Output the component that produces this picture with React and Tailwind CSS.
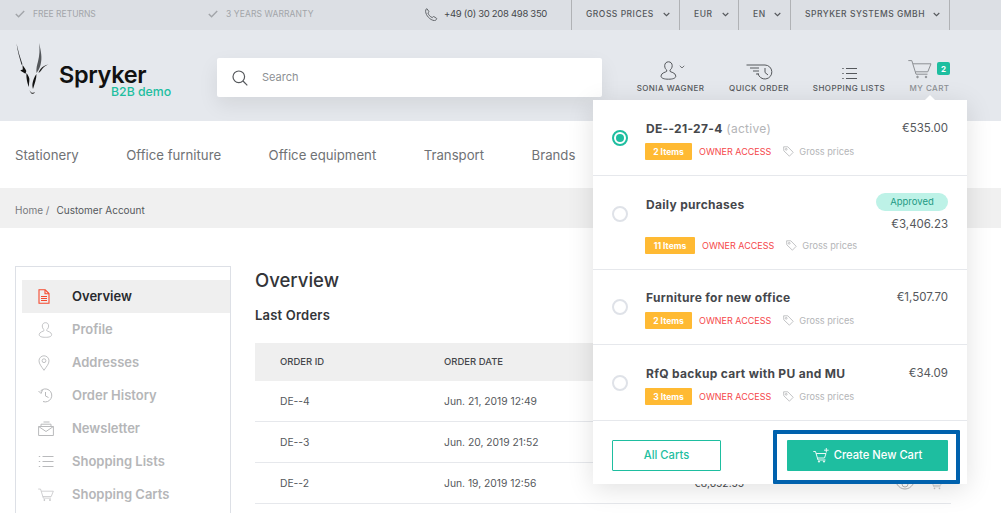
const F = { fontFamily: "Inter, 'Noto Sans', sans-serif" };

const Check = () => (
  <svg width="10" height="8" viewBox="0 0 10 8" fill="none" stroke="#a2a5a9" strokeWidth="1.4"><path d="M.8 4l2.800 2.800L9.200 1" /></svg>
);
const Chev = () => (
  <svg width="7" height="5" viewBox="0 0 7 5" fill="none" stroke="#55585c" strokeWidth="1.100"><path d="M.7 1l2.800 2.700L6.300 1" /></svg>
);
const Phone = () => (
  <svg width="13" height="13" viewBox="0 0 13 13" fill="none" stroke="#55585c" strokeWidth=".9"><path d="M2 .8 3.800 3.400c.2.400 0 .7-.3 1l-.6.600c.6 1.800 2.200 3.600 4.300 4.600l.8-.8c.3-.3.6-.3 1-.1l2.500 1.600c.3.200.3.500.1.800-.6 1-1.400 1.600-2.300 1.500C5 12 .8 7.500.6 3.300.5 2.200 1 1.300 1.500.8c.2-.1.400-.1.500 0Z" /></svg>
);
const UserIcon = ({ c = "#55585c", w = 17, h = 19 }) => (
  <svg width={w} height={h} viewBox="0 0 17 19" fill="none" stroke={c} strokeWidth="1"><path d="M8.500.8c2.200 0 3.700 1.600 3.700 3.900 0 2-1 3.600-2.200 4.300v1.300c0 .7 5.800 1.300 5.800 4.700 0 2.300-3 3.200-7.300 3.200S1 17.300 1 15c0-3.400 5.700-4 5.700-4.700V9C5.500 8.300 4.700 6.700 4.700 4.700 4.700 2.400 6.300.8 8.500.8Z" /></svg>
);
const QuickIcon = () => (
  <svg width="27" height="16" viewBox="0 0 27 16" fill="none" stroke="#55585c" strokeWidth="1"><path d="M.5 1h18.500a7 7 0 1 1-7 8.500" /><path d="M19 4v4.500l3 2.500" /><path d="M4 4h9M7 7h6M10 10h3" /></svg>
);
const ListIcon = ({ c = "#55585c", w = 15, h = 13 }) => (
  <svg width={w} height={h} viewBox="0 0 15 13" fill="none" stroke={c} strokeWidth="1"><path d="M4 1.500h11M4 6.500h11M4 11.500h11M.3 1.500h1.400M.3 6.500h1.400M.3 11.500h1.400" /></svg>
);
const CartIcon = ({ c = "#8d9094", w = 24, h = 21, sw = 1 }) => (
  <svg width={w} height={h} viewBox="0 0 24 19" fill="none" stroke={c} strokeWidth={sw}><path d="M.3.600h3.500l4.200 13.600h11.500" /><path d="M5 3.800h18l-3.200 8H7.300" /><circle cx="9.500" cy="17" r=".8" fill={c} /><circle cx="18" cy="17" r=".8" fill={c} /></svg>
);
const Tag = () => (
  <svg width="11" height="11" viewBox="0 0 11 11" fill="none" stroke="#b4b5b7" strokeWidth=".8"><path d="M.6.800h4.200l5.400 5.500-3.800 3.900L.8 4.800Z" /><circle cx="3.200" cy="3.300" r=".9" /></svg>
);
const Radio = ({ on }) => (
  <div className={"w-4 h-4 rounded-full border-[2px] flex items-center justify-center bg-white " + (on ? "border-[#1ebea0]" : "border-[#dfe2e8]")}>
    {on && <div className="w-2 h-2 rounded-full bg-[#1ebea0]" />}
  </div>
);

const Logo = () => (
  <svg width="35" height="54" viewBox="0 0 32 54" className="shrink-0">
    <path d="M0 .500c1.500 7 3.500 14 6 21l-1 .2C3 15 1 8 0 .500Z" fill="#26282b" />
    <path d="M22.500 0c2 8 3.500 15 1.500 22-1 4-3 6.500-4 8-.5-4 .5-8 1.500-11.500 1.500-6 2-12 1-18.500Z" fill="#55585c" />
    <path d="M6 22c1.500 2 3 4 3.800 6l-.8 2.800L4.500 28l-.6-.8 2.400-.7Z" fill="#111" />
    <path d="M32 21.500c-3 .5-6 2-8 4.500-1.500 2-2 4-2 4 2-1 3-3.500 5-5.500 1.500-1.500 3-2.300 5-3Z" fill="#222" />
    <path d="M10 30c1.500 2 3.500 5 2.800 8-.3 2-.5 4-.3 6-1.500-3-3-9-2.500-14Z" fill="#111" />
    <path d="M20 31c-2 2.500-3.500 6-4 9.500-.3 2 0 4 .5 5.500 1.500-5 3.500-10 3.500-15Z" fill="#111" />
    <path d="M13 47c.5 2 1.800 4 3 4 1.200 0 2-1 2.500-2-1 .5-2 1-3 .7-1-.3-1.800-1.500-2.500-2.700Z" fill="#444" />
  </svg>
);

const DocIcon = () => (
  <svg width="12" height="15" viewBox="0 0 12 15" fill="none" stroke="#f5492f" strokeWidth="1.100"><path d="M1 .8h6.200L11 4.500v9.700H1Z" /><path d="M7 1v3.700h4M3 7.500h6M3 9.500h6M3 11.500h6" /></svg>
);
const PinIcon = () => (
  <svg width="12" height="16" viewBox="0 0 12 16" fill="none" stroke="#b9babc" strokeWidth=".9"><path d="M6 15.300C3.500 11.500 1 9 1 5.800a5 5 0 0 1 10 0C11 9 8.500 11.500 6 15.300Z" /><circle cx="6" cy="5.700" r="1.900" /></svg>
);
const HistIcon = () => (
  <svg width="15" height="15" viewBox="0 0 15 15" fill="none" stroke="#b9babc" strokeWidth="1"><path d="M2.500 3A6.500 6.500 0 1 1 5 13.500" /><path d="M7.500 4v4l3 1.500M.5 3l2.500 2.500L4.500 2" /></svg>
);
const MailIcon = () => (
  <svg width="16" height="15" viewBox="0 0 16 15" fill="none" stroke="#b9babc" strokeWidth="1"><path d="M.6 5.500h14.800v9H.6ZM.6 5.500 8 10.500l7.400-5" /><path d="M3 5.500V3.200h10v2.300M5.500 1h6" /></svg>
);
const Eye = () => (
  <svg width="18" height="12" viewBox="0 0 18 12" fill="none" stroke="#b4b5b7" strokeWidth="1"><path d="M.8 6C3 2.500 6 1 9 1s6 1.500 8.200 5C15 9.500 12 11 9 11S3 9.500.8 6Z" /><circle cx="9" cy="6" r="3" /></svg>
);

const Side = ({ icon, label, active }) => (
  <div className={"h-[33px] flex items-center pl-4 " + (active ? "bg-[#efefef] text-[#282a2e]" : "text-[#b5b6b8]")}>
    <div className="w-[34px] flex justify-start">{icon}</div>
    <span className="text-[13px] font-semibold">{label}</span>
  </div>
);

const Cart = ({ title, active, price, approved, n, w = "w-[47px]", tight }) => (
  <div className={"flex pl-[19px] pr-[19px] pb-[15px] border-b border-[#e6e8ec] " + (tight ? "pt-[19px]" : "pt-5")}>
    <div className="mt-[10px] mr-[17px] shrink-0"><Radio on={active} /></div>
    <div className="flex-1">
      <div className="flex justify-between">
        <div className="ml-[1px] text-[12px] leading-[17px] font-bold text-[#45474b] tracking-[.3px]">{title}{active && <span className="font-normal text-[#b4b5b7]"> (active)</span>}</div>
        <div className="flex flex-col items-end">
          {approved && <div className="-mt-[3px] mb-[5px] h-[18px] w-[72px] rounded-full bg-[#bdf2e7] text-[#1f9a84] text-[9.5px] flex items-center justify-center">Approved</div>}
          <div className={"text-[11.5px] leading-[17px] text-[#55585c] " + (approved ? "-mb-[2px]" : "")}>{price}</div>
        </div>
      </div>
      <div className="mt-[6px] flex items-center h-[17px]">
        <div className={"h-[17px] pt-[1px] rounded-[1px] bg-[#ffba33] text-white text-[8.5px] font-bold flex items-center justify-center " + w}>{n} Items</div>
        <span className="ml-[7px] text-[9px] text-[#f5474a]">OWNER ACCESS</span>
        <span className="ml-3 flex"><Tag /></span>
        <span className="ml-[5px] text-[9.2px] text-[#b4b5b7]">Gross prices</span>
      </div>
    </div>
  </div>
);

const Opt = ({ label, cls }) => (
  <div className={"h-full border-r border-[#b0b2b5] flex items-center justify-between text-[8.5px] font-medium tracking-[.5px] text-[#55585c] pb-[2px] " + cls}>
    <span>{label}</span><Chev />
  </div>
);

const Act = ({ icon, label, cls = "text-[#55585c]", w }) => (
  <div className={"flex flex-col items-center " + w}>
    <div className="h-[21px] flex items-end justify-center">{icon}</div>
    <div className={"mt-[3px] text-[8px] leading-[11px] font-medium tracking-[.45px] whitespace-nowrap " + cls}>{label}</div>
  </div>
);

const Row = ({ id, date, total }) => (
  <div className="h-[41px] pt-[2px] border-b border-[#e6e8ec] flex items-center text-[10.3px] text-[#55585c]">
    <div className="pl-[25px] w-[189px]">{id}</div>
    <div className="w-[250px]">{date}</div>
    {total && <div className="text-[#45474b]">{total}</div>}
    {total && <div className="ml-auto flex items-center gap-[15px] pr-2"><Eye /><CartIcon w={14} h={12} c="#b4b5b7" /></div>}
  </div>
);

export default function App() {
  return (
    <div style={F} className="relative w-[1001px] h-[513px] overflow-hidden bg-white">
      <div className="h-[30px] bg-[#dcdfe4] flex items-center pl-[15px] text-[8.5px]">
        <div className="w-[193px] flex items-center gap-2 text-[#a2a5a9] pb-[2px]"><Check /><span>FREE RETURNS</span></div>
        <div className="w-[217px] flex items-center gap-2 text-[#a2a5a9] tracking-[.1px] pb-[2px]"><Check /><span>3 YEARS WARRANTY</span></div>
        <div className="w-[147px] h-full border-r border-[#b0b2b5] flex items-center gap-[6px] text-[9.5px] tracking-[-.3px] text-[#45474b] pb-[2px]"><Phone /><span>+49 (0) 30 208 498 350</span></div>
        <Opt label="GROSS PRICES" cls="w-[108px] pl-[14px] pr-[9px]" />
        <Opt label="EUR" cls="w-[59px] pl-[14px] pr-[9px]" />
        <Opt label="EN" cls="w-[52px] pl-[14px] pr-[9px]" />
        <Opt label="SPRYKER SYSTEMS GMBH" cls="w-[159px] pl-[14px] pr-[9px]" />
      </div>
      <div className="h-[91px] bg-[#e5e8ed] flex pl-[15px]">
        <div className="w-[202px] pt-[13px] flex">
          <Logo />
          <div className="ml-[9px] mt-[21px]">
            <div className="text-[23.5px] leading-[22px] font-semibold text-[#111] tracking-[-.35px]">Spryker</div>
            <div className="ml-[52px] text-[12.3px] leading-[12px] font-medium text-[#1ebea0] whitespace-nowrap">B2B demo</div>
          </div>
        </div>
        <div className="mt-7 w-[385px] h-[39px] bg-white rounded-[2px] shadow-[0_8px_20px_rgba(0,0,0,.08)] flex items-center pl-[15px]">
          <svg width="16" height="16" viewBox="0 0 16 16" fill="none" stroke="#55585c" strokeWidth="1.200"><circle cx="6.800" cy="6.800" r="5.800" /><path d="M11 11l4.300 4.300" /></svg>
          <span className="ml-[14px] text-[11px] text-[#8d9094]">Search</span>
        </div>
        <div className="ml-[34px] pt-[29px] flex gap-6 items-start">
          <Act w="w-[69px]" label="SONIA WAGNER" icon={<div className="flex items-start ml-1"><UserIcon /><svg className="mt-1 ml-[2px]" width="6" height="4" viewBox="0 0 7 5" fill="none" stroke="#55585c"><path d="M.7 1l2.800 2.700L6.300 1" /></svg></div>} />
          <Act w="w-[60px]" label="QUICK ORDER" icon={<QuickIcon />} />
          <Act w="w-[72px]" label="SHOPPING LISTS" icon={<ListIcon />} />
          <Act w="w-[40px]" label="MY CART" cls="text-[#8d9094] ml-[1px]" icon={<div className="flex items-start"><CartIcon /><div className="ml-[5px] mt-[3px] w-[13px] h-[13px] rounded-[2px] bg-[#1ebea0] text-white text-[8px] font-bold flex items-center justify-center">2</div></div>} />
        </div>
      </div>
      <div className="h-[67px] flex items-center pl-[15px] pt-[2px] gap-[47.5px] text-[13.2px] text-[#6f7275]">
        <span>Stationery</span><span>Office furniture</span><span>Office equipment</span><span>Transport</span><span>Brands</span>
      </div>
      <div className="h-[40px] bg-[#f0f0f0] flex items-center pl-[15px] pt-[4px] text-[10px] text-[#55585c]">
        <span className="text-[#77797d]">Home /</span><span className="ml-[7px]">Customer Account</span>
      </div>
      <div className="flex pl-[15px] pt-[38px]">
        <div className="w-[216px] h-[300px] border border-[#dde0e6] pl-[6px] pt-[13px]">
          <Side active label="Overview" icon={<DocIcon />} />
          <Side label="Profile" icon={<UserIcon c="#b9babc" w={15} h={16} />} />
          <Side label="Addresses" icon={<PinIcon />} />
          <Side label="Order History" icon={<HistIcon />} />
          <Side label="Newsletter" icon={<MailIcon />} />
          <Side label="Shopping Lists" icon={<ListIcon c="#b9babc" w={16} h={13} />} />
          <Side label="Shopping Carts" icon={<CartIcon c="#b9babc" w={16} h={14} />} />
        </div>
        <div className="ml-6 w-[696px]">
          <div className="mt-[1px] text-[18.5px] leading-[26px] font-medium text-[#333539]">Overview</div>
          <div className="mt-[14px] text-[13px] leading-[16px] font-semibold text-[#333539] tracking-[.2px]">Last Orders</div>
          <div className="mt-5 h-[38px] bg-[#efefef] flex items-center text-[9.5px] font-medium text-[#45474b]">
            <div className="pl-[25px] w-[189px]">ORDER ID</div><div>ORDER DATE</div>
          </div>
          <Row id="DE--4" date="Jun. 21, 2019 12:49" />
          <Row id="DE--3" date="Jun. 20, 2019 21:52" />
          <Row id="DE--2" date="Jun. 19, 2019 12:56" total="€8,652.55" />
        </div>
      </div>
      <div className="absolute left-[593px] top-[100px] w-[374px] h-[384px] bg-white shadow-[0_5px_25px_rgba(0,0,0,.12)] flex flex-col">
        <div className="absolute -top-[5px] left-[332px] w-0 h-0 border-x-[5px] border-x-transparent border-b-[5px] border-b-white" />
        <Cart active title="DE--21-27-4" price="€535.00" n="2" />
        <Cart title="Daily purchases" approved price="€3,406.23" n="11" w="w-[50px]" />
        <Cart tight title="Furniture for new office" price="€1,507.70" n="2" />
        <Cart title="RfQ backup cart with PU and MU" price="€34.09" n="3" />
        <div className="flex pl-[19px] pr-[19px] pt-[19px] justify-between">
          <div className="w-[109px] h-[31px] border border-[#1ebea0] rounded-[1px] text-[#1ebea0] text-[11.2px] font-medium flex items-center justify-center">All Carts</div>
          <div className="w-[161px] h-[31px] bg-[#1ebea0] rounded-[1px] text-white text-[11.2px] font-medium flex items-center justify-center gap-[5px]">
            <svg width="16" height="15" viewBox="0 0 16 15" fill="none" stroke="#fff" strokeWidth=".9"><path d="M.3 3.500h2.200L5 12h7.500M3.200 5.500H13l-1.500 4.500H4.500" /><circle cx="6" cy="13.600" r=".6" fill="#fff" /><circle cx="11" cy="13.600" r=".6" fill="#fff" /><path d="M13.300 0v4.500M11 2.200h4.600" /></svg>
            <span>Create New Cart</span>
          </div>
        </div>
      </div>
      <div className="absolute left-[773px] top-[430px] w-[187px] h-[54px] border-[4px] border-[#0061ad] rounded-[1px]" />
    </div>
  );
}
